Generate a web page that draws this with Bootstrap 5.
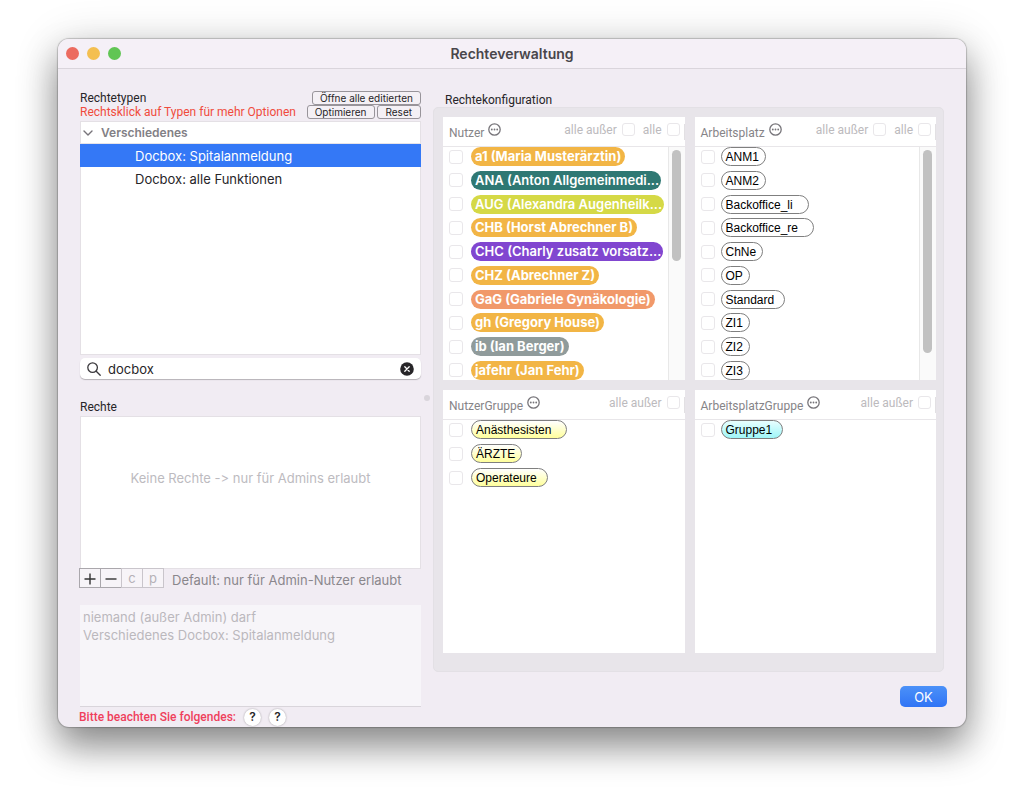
<!DOCTYPE html>
<html lang="de">
<head>
<meta charset="utf-8">
<meta name="viewport" content="width=device-width, initial-scale=1">
<title>Rechteverwaltung</title>
<link href="https://cdn.jsdelivr.net/npm/bootstrap@5.3.0/dist/css/bootstrap.min.css" rel="stylesheet">
<style>
body{background:#fff;color:#272528;font-family:Roboto,"Liberation Sans",sans-serif;font-size:12px;line-height:14px;padding:39px 58px 77px}
h1,button,input,textarea,.rights,.tools,.mini{font-family:Inter,"Liberation Sans",sans-serif;font-feature-settings:"calt" 0}
.window{background:#f1ecf3;border-radius:11px;box-shadow:0 0 1px 1px rgba(0,0,0,.2),0 20px 36px rgba(0,0,0,.4),0 4px 46px rgba(0,0,0,.16)}
.titlebar{height:30px;background:#f5f0f7;border-bottom:1px solid #dad5dc;border-radius:11px 11px 0 0;padding:0 8px}
.titlebar h1{font-size:14px;line-height:20px;font-weight:600;color:#49464b}
.lights{gap:8px}
.light{width:13px;height:13px;border-radius:50%}
.light.close-dot{background:#ec6b60}.light.min-dot{background:#f4bf50}.light.max-dot{background:#61c554}
.content{display:grid;grid-template-columns:minmax(0,341fr) minmax(0,514fr);column-gap:12px;padding:22px 19px 0 22px}
.right{padding-top:2px}
.hint{color:#f04b3c}
.mini{font-size:10px;line-height:12px;border:1px solid #98949a;border-radius:3px;background:#f4f0f5;color:#272528;padding:0 7px;height:14px}
.mini-row{gap:2px}
.tree{background:#fff;border:1px solid #e4e0e5;height:234px;margin-top:2px}
.tree-head{height:22px;border-bottom:1px solid #e6e3e8;color:#828085;font-weight:600;gap:8px;padding-left:2px;font-family:Inter,"Liberation Sans",sans-serif}
.tree button{height:23px;border:0;background:#fff;font-size:13px;line-height:20px;padding:0 0 0 54px;text-align:left;color:#272528}
.tree button.active{background:#3478f6;color:#fff;margin:0 -1px;padding-left:55px}
.search{background:#fff;height:21px;border-radius:5px;margin-top:3px;padding:0 7px;gap:7px;box-shadow:0 1px 1px rgba(0,0,0,.25)}
.search input{border:0;outline:0;background:none;font-size:13px;line-height:20px;color:#272528;padding:0;min-width:0}
.section-label{margin-top:21px}
.rights{background:#fff;border:1px solid #e4e0e5;height:153px;margin-top:2px;padding-bottom:30px;color:#bdbbbf;font-size:13px}
.tools{margin:-1px 0 0 -1px}
.tools button{width:22px;height:20px;border:1px solid #aaa7ac;background:#f7f4f8;color:#333;margin-right:-1px;padding:0;font-size:14px;line-height:16px}
.tools button:disabled{border-color:#c9c5cb;color:#b5b1b7;font-size:13px}
.tools span{font-size:13px;color:#8a878c;line-height:20px;padding:2px 0 0 9px}
.summary{height:102px;margin-top:15px;border:0;border-bottom:1px solid #d9d5db;background:#f7f5f9;color:#bbb8bd;font-size:13px;line-height:18px;padding:3px;resize:none}
.note{color:#ef3f5c;font-weight:500;gap:8px;height:20px;margin-left:-1px}
.help{width:17px;height:17px;border:0;border-radius:50%;background:#fff;box-shadow:0 0 2px rgba(0,0,0,.35);font-weight:600;font-size:12px;line-height:16px;padding:0;color:#272528}
.config{background:#e8e5ea;border:1px solid #e3e0e5;border-radius:5px;margin-right:3px;padding:9px 7px 18px 9px;display:grid;grid-template-columns:1fr 1fr;gap:10px}
.pane{background:#fff;height:263px;min-width:0}
.pane-head{height:30px;border-bottom:1px solid #e8e6e9;padding-left:6px;color:#868488}
.pane-head h2{font-size:12px;line-height:14px;font-weight:400;margin:2px 4px 0 0}
.pane-head label{color:#bcbabd;margin:-4px 5px 0 0}
.pane-head .form-check-input{margin-top:-4px}
.form-check-input{width:14px;height:14px;margin:0;border:1px solid #e9e7ea;border-radius:3px;flex:none}
.pane-head .form-check-input{width:13px;height:13px}
.pane-body{height:233px;overflow:hidden}
.entries{gap:5px;min-width:0}
.entry{height:19px;gap:8px;padding-left:6px}
.places .entry{gap:6px}
.pill{height:19px;border-radius:10px;border:1px solid #7f7f7f;padding:0 6px 0 4px;font-family:"Liberation Sans",sans-serif;font-size:12px;line-height:19px;color:#000;white-space:nowrap;background:#fff}
.pill.wide{padding-right:10px}
.pill.wider{padding-right:15px}
.user{border:0;padding:0 4px;color:#fff;font-family:Inter,"Liberation Sans",sans-serif;font-weight:700;font-size:13px;line-height:18px;background:#f2b545}
.user.cut{font-weight:600;padding-right:2px}
.teal{background:#2f7873}.lime{background:#d5d946}.violet{background:#8146d0}.salmon{background:#f1996a}.slate{background:#909b9b}
.yellow{background:linear-gradient(#fff,#ffff9c)}.cyan{background:linear-gradient(#e8ffff,#9ff6f8)}
.scroll{width:17px;flex:none;background:#fafafa;border-left:1px solid #e8e8e8;padding:3px}
.thumb{width:9px;height:111px;border-radius:5px;background:#c1c1c1}
.thumb.long{height:203px}
.tick{width:1px;height:16px;background:#e2e0e3}
.ok{width:47px;height:21px;border:0;border-radius:5px;background:linear-gradient(#4b91f8,#3074f5);color:#fff;font-size:13px;line-height:20px;padding:0;margin-top:14px}
.split{position:absolute;right:-9px;top:304px;width:6px;height:6px;border-radius:50%;background:#d9d5db}
</style>
</head>
<body>
<main class="window">
<header class="titlebar d-flex align-items-center position-relative">
<div class="lights d-flex position-absolute"><span class="light close-dot"></span><span class="light min-dot"></span><span class="light max-dot"></span></div>
<h1 class="m-0 w-100 text-center">Rechteverwaltung</h1>
</header>
<div class="content">
<section class="d-flex flex-column position-relative">
<div class="d-flex justify-content-between"><span>Rechtetypen</span><button class="mini">Öffne alle editierten</button></div>
<div class="mini-row d-flex text-nowrap"><span class="hint me-auto">Rechtsklick auf Typen für mehr Optionen</span><button class="mini">Optimieren</button><button class="mini px-2">Reset</button></div>
<div class="tree d-flex flex-column">
<div class="tree-head d-flex align-items-center"><svg width="10" height="8" viewBox="0 0 10 8"><path d="M1 2l4 4 4-4" fill="none" stroke="#77747a" stroke-width="1.4" stroke-linecap="round" stroke-linejoin="round"/></svg>Verschiedenes</div>
<button class="active">Docbox: Spitalanmeldung</button>
<button>Docbox: alle Funktionen</button>
</div>
<div class="search d-flex align-items-center">
<svg width="14" height="14" viewBox="0 0 14 14"><g fill="none" stroke="#3b393d" stroke-width="1.3" stroke-linecap="round"><circle cx="5.6" cy="5.6" r="4.8"/><path d="M9.2 9.2l4 4"/></g></svg>
<input class="flex-grow-1" type="text" value="docbox" aria-label="Suche">
<button class="border-0 bg-transparent p-0 d-flex" aria-label="Löschen"><svg width="14" height="14" viewBox="0 0 14 14"><circle cx="7" cy="7" r="6.8" fill="#272528"/><path d="M4.8 4.8l4.4 4.4M9.2 4.8l-4.4 4.4" stroke="#fff" stroke-width="1.3" stroke-linecap="round"/></svg></button>
</div>
<span class="split"></span>
<div class="section-label">Rechte</div>
<div class="rights d-flex align-items-center justify-content-center">Keine Rechte -&gt; nur für Admins erlaubt</div>
<div class="tools d-flex text-nowrap">
<button aria-label="Hinzufügen"><svg width="14" height="14" viewBox="0 0 14 14"><path d="M1.500 7h11M7 1.500v11" stroke="#333" stroke-width="1.400"/></svg></button><button aria-label="Entfernen"><svg width="14" height="14" viewBox="0 0 14 14"><path d="M1.500 7h11" stroke="#333" stroke-width="1.400"/></svg></button><button disabled>c</button><button disabled>p</button>
<span>Default: nur für Admin-Nutzer erlaubt</span>
</div>
<textarea class="summary w-100" readonly aria-label="Zusammenfassung">niemand (außer Admin) darf
Verschiedenes Docbox: Spitalanmeldung</textarea>
<div class="note d-flex align-items-center">Bitte beachten Sie folgendes:<button class="help">?</button><button class="help">?</button></div>
</section>
<section class="right d-flex flex-column">
<div class="ms-2 ps-1">Rechtekonfiguration</div>
<div class="config">
<div class="pane">
<div class="pane-head d-flex align-items-center"><h2>Nutzer</h2><svg class="me-auto mb-1" width="13" height="13" viewBox="0 0 13 13"><circle cx="6.500" cy="6.500" r="5.700" fill="none" stroke="#77757a" stroke-width="1.300"/><g fill="#77757a"><circle cx="3.800" cy="6.500" r=".9"/><circle cx="6.500" cy="6.500" r=".9"/><circle cx="9.200" cy="6.500" r=".9"/></g></svg>
<label for="n1">alle außer</label><input class="form-check-input me-2" type="checkbox" id="n1"><label for="n2">alle</label><input class="form-check-input me-1" type="checkbox" id="n2"><i class="tick"></i></div>
<div class="pane-body d-flex">
<div class="entries d-flex flex-column flex-grow-1 justify-content-between gap-0">
<div class="entry d-flex align-items-center"><input class="form-check-input" type="checkbox" id="u1"><label class="pill user" for="u1">a1 (Maria Musterärztin)</label></div>
<div class="entry d-flex align-items-center"><input class="form-check-input" type="checkbox" id="u2"><label class="pill user cut teal" for="u2">ANA (Anton Allgemeinmedi...</label></div>
<div class="entry d-flex align-items-center"><input class="form-check-input" type="checkbox" id="u3"><label class="pill user cut lime" for="u3">AUG (Alexandra Augenheilk...</label></div>
<div class="entry d-flex align-items-center"><input class="form-check-input" type="checkbox" id="u4"><label class="pill user" for="u4">CHB (Horst Abrechner B)</label></div>
<div class="entry d-flex align-items-center"><input class="form-check-input" type="checkbox" id="u5"><label class="pill user cut violet" for="u5">CHC (Charly zusatz vorsatz...</label></div>
<div class="entry d-flex align-items-center"><input class="form-check-input" type="checkbox" id="u6"><label class="pill user" for="u6">CHZ (Abrechner Z)</label></div>
<div class="entry d-flex align-items-center"><input class="form-check-input" type="checkbox" id="u7"><label class="pill user salmon" for="u7">GaG (Gabriele Gynäkologie)</label></div>
<div class="entry d-flex align-items-center"><input class="form-check-input" type="checkbox" id="u8"><label class="pill user" for="u8">gh (Gregory House)</label></div>
<div class="entry d-flex align-items-center"><input class="form-check-input" type="checkbox" id="u9"><label class="pill user slate" for="u9">ib (Ian Berger)</label></div>
<div class="entry d-flex align-items-center"><input class="form-check-input" type="checkbox" id="u10"><label class="pill user" for="u10">jafehr (Jan Fehr)</label></div>
</div>
<div class="scroll"><div class="thumb"></div></div>
</div>
</div>
<div class="pane places">
<div class="pane-head d-flex align-items-center"><h2>Arbeitsplatz</h2><svg class="me-auto mb-1" width="13" height="13" viewBox="0 0 13 13"><circle cx="6.500" cy="6.500" r="5.700" fill="none" stroke="#77757a" stroke-width="1.300"/><g fill="#77757a"><circle cx="3.800" cy="6.500" r=".9"/><circle cx="6.500" cy="6.500" r=".9"/><circle cx="9.200" cy="6.500" r=".9"/></g></svg>
<label for="a1">alle außer</label><input class="form-check-input me-2" type="checkbox" id="a1"><label for="a2">alle</label><input class="form-check-input me-1" type="checkbox" id="a2"><i class="tick"></i></div>
<div class="pane-body d-flex">
<div class="entries d-flex flex-column flex-grow-1 justify-content-between gap-0">
<div class="entry d-flex align-items-center"><input class="form-check-input" type="checkbox" id="p1"><label class="pill" for="p1">ANM1</label></div>
<div class="entry d-flex align-items-center"><input class="form-check-input" type="checkbox" id="p2"><label class="pill" for="p2">ANM2</label></div>
<div class="entry d-flex align-items-center"><input class="form-check-input" type="checkbox" id="p3"><label class="pill wider" for="p3">Backoffice_li</label></div>
<div class="entry d-flex align-items-center"><input class="form-check-input" type="checkbox" id="p4"><label class="pill wider" for="p4">Backoffice_re</label></div>
<div class="entry d-flex align-items-center"><input class="form-check-input" type="checkbox" id="p5"><label class="pill" for="p5">ChNe</label></div>
<div class="entry d-flex align-items-center"><input class="form-check-input" type="checkbox" id="p6"><label class="pill" for="p6">OP</label></div>
<div class="entry d-flex align-items-center"><input class="form-check-input" type="checkbox" id="p7"><label class="pill wide" for="p7">Standard</label></div>
<div class="entry d-flex align-items-center"><input class="form-check-input" type="checkbox" id="p8"><label class="pill" for="p8">ZI1</label></div>
<div class="entry d-flex align-items-center"><input class="form-check-input" type="checkbox" id="p9"><label class="pill" for="p9">ZI2</label></div>
<div class="entry d-flex align-items-center"><input class="form-check-input" type="checkbox" id="p10"><label class="pill" for="p10">ZI3</label></div>
</div>
<div class="scroll"><div class="thumb long"></div></div>
</div>
</div>
<div class="pane">
<div class="pane-head d-flex align-items-center"><h2>NutzerGruppe</h2><svg class="me-auto mb-1" width="13" height="13" viewBox="0 0 13 13"><circle cx="6.500" cy="6.500" r="5.700" fill="none" stroke="#77757a" stroke-width="1.300"/><g fill="#77757a"><circle cx="3.800" cy="6.500" r=".9"/><circle cx="6.500" cy="6.500" r=".9"/><circle cx="9.200" cy="6.500" r=".9"/></g></svg>
<label for="ng">alle außer</label><input class="form-check-input me-1" type="checkbox" id="ng"><i class="tick"></i></div>
<div class="entries d-flex flex-column">
<div class="entry d-flex align-items-center"><input class="form-check-input" type="checkbox" id="g1"><label class="pill yellow wider" for="g1">Anästhesisten</label></div>
<div class="entry d-flex align-items-center"><input class="form-check-input" type="checkbox" id="g2"><label class="pill yellow" for="g2">ÄRZTE</label></div>
<div class="entry d-flex align-items-center"><input class="form-check-input" type="checkbox" id="g3"><label class="pill yellow wide" for="g3">Operateure</label></div>
</div>
</div>
<div class="pane places">
<div class="pane-head d-flex align-items-center"><h2>ArbeitsplatzGruppe</h2><svg class="me-auto mb-1" width="13" height="13" viewBox="0 0 13 13"><circle cx="6.500" cy="6.500" r="5.700" fill="none" stroke="#77757a" stroke-width="1.300"/><g fill="#77757a"><circle cx="3.800" cy="6.500" r=".9"/><circle cx="6.500" cy="6.500" r=".9"/><circle cx="9.200" cy="6.500" r=".9"/></g></svg>
<label for="ag">alle außer</label><input class="form-check-input me-1" type="checkbox" id="ag"><i class="tick"></i></div>
<div class="entries d-flex flex-column">
<div class="entry d-flex align-items-center"><input class="form-check-input" type="checkbox" id="h1"><label class="pill cyan wide" for="h1">Gruppe1</label></div>
</div>
</div>
</div>
<button class="ok align-self-end">OK</button>
</section>
</div>
</main>
<script src="https://cdn.jsdelivr.net/npm/bootstrap@5.3.0/dist/js/bootstrap.bundle.min.js"></script>
</body>
</html>
